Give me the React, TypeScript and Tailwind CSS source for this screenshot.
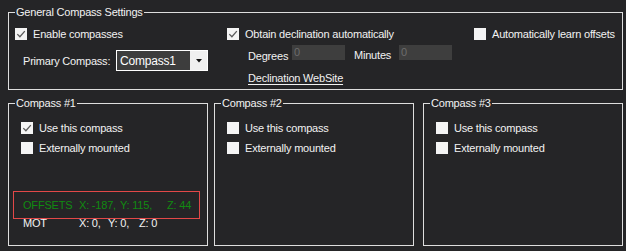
import React from "react";

// Small square checkbox in the look of the WinForms dark theme
const Box = ({ checked = false }: { checked?: boolean }) => (
  <span className="w-[12px] h-[12px] bg-[#f4f4f4] flex items-center justify-center shrink-0">
    {checked && (
      <svg width="10" height="10" viewBox="0 0 10 10">
        <path d="M1.3 5.1 L3.9 7.7 L8.8 2.1" stroke="#5c5c5c" strokeWidth="1.3" fill="none" />
      </svg>
    )}
  </span>
);

const CheckRow = ({ label, checked }: { label: string; checked?: boolean }) => (
  <div className="flex items-center h-[12px]">
    <Box checked={checked} />
    <span className="ml-[6px] leading-[13px] whitespace-nowrap">{label}</span>
  </div>
);

const Group = ({
  title,
  className,
  children,
}: {
  title: string;
  className: string;
  children?: React.ReactNode;
}) => (
  <fieldset className={`border border-[#dedede] ${className}`}>
    <legend className="ml-[6px] px-[1px] leading-[14px] whitespace-nowrap">{title}</legend>
    {children}
  </fieldset>
);

const Compass = ({
  title,
  useIt,
  className,
  children,
}: {
  title: string;
  useIt?: boolean;
  className: string;
  children?: React.ReactNode;
}) => (
  <Group title={title} className={`w-[200px] h-[150px] shrink-0 ${className}`}>
    <div className="pt-[12px] pl-[12px] flex flex-col gap-[8px]">
      <CheckRow label="Use this compass" checked={useIt} />
      <CheckRow label="Externally mounted" />
    </div>
    {children}
  </Group>
);

export default function App() {
  return (
    <div className="w-[626px] h-[251px] overflow-hidden bg-[#252527] text-[#f2f2f2] font-['Liberation_Sans',Arial,sans-serif] text-[11px] tracking-[-0.2px] pl-[8px] pt-[5px]">
      <Group title="General Compass Settings" className="w-[615px] h-[85px]">
        <div className="flex pt-[9px]">
          {/* left column */}
          <div className="w-[218px] pl-[6px] flex flex-col">
            <CheckRow label="Enable compasses" checked />
            <div className="flex items-center mt-[10px] ml-[8px]">
              <span className="w-[93px] leading-[13px] pt-[1px]">Primary Compass:</span>
              <div className="w-[92px] h-[21px] border border-white bg-[#3d3d3d] flex">
                <span className="flex-1 flex items-center pl-[3px] text-white text-[12px]">Compass1</span>
                <span className="w-[17px] bg-[#f0f0f0] flex items-center justify-center">
                  <svg width="6" height="4" viewBox="0 0 6 4">
                    <path d="M0 0 H6 L3 3.5 Z" fill="#111" />
                  </svg>
                </span>
              </div>
            </div>
          </div>

          {/* declination column */}
          <div className="w-[247px] flex flex-col">
            <CheckRow label="Obtain declination automatically" checked />
            <div className="flex items-start mt-[5px] ml-[21px]">
              <span className="w-[44px] pt-[5px] leading-[13px]">Degrees</span>
              <div className="w-[53px] h-[15px] bg-[#3e3e3e] text-[#6c6c6c] pl-[2px] leading-[15px]">0</div>
              <span className="w-[45px] ml-[9px] pt-[4px] leading-[13px]">Minutes</span>
              <div className="w-[53px] h-[15px] bg-[#3e3e3e] text-[#6c6c6c] pl-[2px] leading-[15px]">0</div>
            </div>
            <span className="ml-[21px] mt-[9px] leading-[13px] underline underline-offset-[2px] w-fit">
              Declination WebSite
            </span>
          </div>

          {/* learn offsets */}
          <div className="flex flex-col">
            <CheckRow label="Automatically learn offsets" />
          </div>
        </div>
      </Group>

      <div className="flex mt-[6px]">
        <Compass title="Compass #1" useIt className="">
          <div className="ml-[4px] mt-[37px] w-[187px] h-[28px] border border-[#e24848] pt-[7px] pl-[9px] flex text-[#118a11] leading-[13px] whitespace-nowrap">
            <span className="w-[56px] shrink-0">OFFSETS</span>
            <span className="w-[41px] shrink-0">X: -187,</span>
            <span className="w-[47px] shrink-0">Y: 115,</span>
            <span>Z: 44</span>
          </div>
          <div className="-mt-[2px] pl-[14px] flex leading-[13px] whitespace-nowrap">
            <span className="w-[56px]">MOT</span>
            <span className="w-[29px]">X: 0,</span>
            <span className="w-[31px]">Y: 0,</span>
            <span>Z: 0</span>
          </div>
        </Compass>
        <Compass title="Compass #2" className="ml-[6px]" />
        <Compass title="Compass #3" className="ml-[9px]" />
      </div>
    </div>
  );
}
